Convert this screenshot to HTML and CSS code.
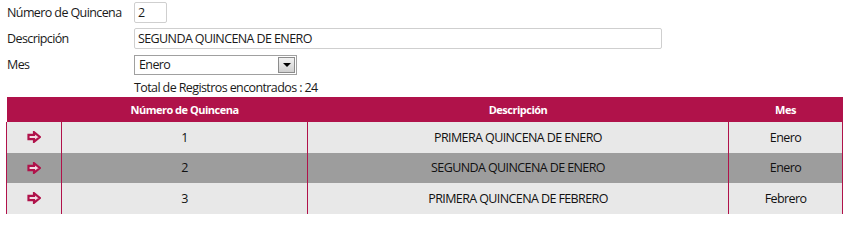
FILE: index.html
```html
<!DOCTYPE html>
<html lang="es">
<head>
<meta charset="utf-8">
<title>Quincenas</title>
<link rel="stylesheet" href="styles.css">
</head>
<body>
<div class="form">
  <div class="row">
    <label class="lbl">Número de Quincena</label>
    <div class="input num">2</div>
  </div>
  <div class="row">
    <label class="lbl">Descripción</label>
    <div class="input desc">SEGUNDA QUINCENA DE ENERO</div>
  </div>
  <div class="row">
    <label class="lbl">Mes</label>
    <div class="select">
      <span class="sel-text">Enero</span>
      <span class="sel-btn"><span class="tri"></span></span>
    </div>
  </div>
  <div class="row total-row">
    <span class="lbl"></span>
    <span class="total">Total de Registros encontrados : 24</span>
  </div>
</div>
<table class="grid">
  <thead>
    <tr>
      <th class="c1"></th>
      <th class="c2">Número de Quincena</th>
      <th class="c3">Descripción</th>
      <th class="c4">Mes</th>
    </tr>
  </thead>
  <tbody>
    <tr>
      <td class="c1"><svg class="arrow" viewBox="0 0 14 12" width="14" height="12"><path d="M1.5 3.8 H7 V1.2 L12.8 6 L7 10.8 V8.2 H1.5 Z" fill="#f3dbe4" stroke="#b0124a" stroke-width="2.2" stroke-linejoin="miter"/></svg></td>
      <td class="c2">1</td>
      <td class="c3">PRIMERA QUINCENA DE ENERO</td>
      <td class="c4">Enero</td>
    </tr>
    <tr class="sel">
      <td class="c1"><svg class="arrow" viewBox="0 0 14 12" width="14" height="12"><path d="M1.5 3.8 H7 V1.2 L12.8 6 L7 10.8 V8.2 H1.5 Z" fill="#f3dbe4" stroke="#b0124a" stroke-width="2.2" stroke-linejoin="miter"/></svg></td>
      <td class="c2">2</td>
      <td class="c3">SEGUNDA QUINCENA DE ENERO</td>
      <td class="c4">Enero</td>
    </tr>
    <tr>
      <td class="c1"><svg class="arrow" viewBox="0 0 14 12" width="14" height="12"><path d="M1.5 3.8 H7 V1.2 L12.8 6 L7 10.8 V8.2 H1.5 Z" fill="#f3dbe4" stroke="#b0124a" stroke-width="2.2" stroke-linejoin="miter"/></svg></td>
      <td class="c2">3</td>
      <td class="c3">PRIMERA QUINCENA DE FEBRERO</td>
      <td class="c4">Febrero</td>
    </tr>
  </tbody>
</table>
</body>
</html>
```

FILE: styles.css
```css
html, body {
  margin: 0;
  padding: 0;
  background: #ffffff;
}
body {
  font-family: "Open Sans", "Noto Sans", sans-serif;
  font-size: 12.5px;
  letter-spacing: -0.6px;
  color: #1a1a1a;
}
.form {
  padding: 2px 0 0 7px;
}
.row {
  display: flex;
  align-items: center;
  height: 21px;
  margin-bottom: 5px;
}
.lbl {
  width: 127px;
  flex: none;
}
.input {
  box-sizing: border-box;
  height: 21px;
  border: 1px solid #cfcfcf;
  border-radius: 2px;
  padding: 0 4px 0 3px;
  line-height: 19px;
}
.num { width: 33px; }
.desc { width: 528px; }
.select {
  box-sizing: border-box;
  width: 163px;
  height: 20px;
  border: 1px solid #a0a0a0;
  display: flex;
  align-items: stretch;
}
.sel-text {
  flex: 1;
  padding-left: 4px;
  line-height: 18px;
}
.sel-btn {
  width: 15px;
  margin: 1px;
  border: 1px solid #8c8c8c;
  background: linear-gradient(#f2f2f2, #d0d0d0);
  display: flex;
  align-items: center;
  justify-content: center;
}
.tri {
  width: 0;
  height: 0;
  border-left: 4px solid transparent;
  border-right: 4px solid transparent;
  border-top: 4px solid #000;
}
.total-row {
  height: 15px;
  margin-bottom: 0;
}
.grid {
  margin: 2px 0 0 6px;
  border-collapse: collapse;
  width: 836px;
  table-layout: fixed;
}
.grid th {
  background: #b0124a;
  color: #ffffff;
  font-weight: bold;
  font-size: 11px;
  letter-spacing: -0.5px;
  height: 25px;
  padding: 0;
  text-align: center;
}
.grid td {
  background: #e8e8e8;
  height: 30.5px;
  padding: 0;
  text-align: center;
  color: #111;
  border-left: 1px solid #b0124a;
  border-right: 1px solid #b0124a;
}
.grid tr.sel td {
  background: #9d9d9d;
}
.c1 { width: 55px; }
.c2 { width: 246px; }
.c3 { width: 421px; }
.c4 { width: 114px; }
.arrow {
  display: block;
  margin: 0 auto 0 20px;
}
```
